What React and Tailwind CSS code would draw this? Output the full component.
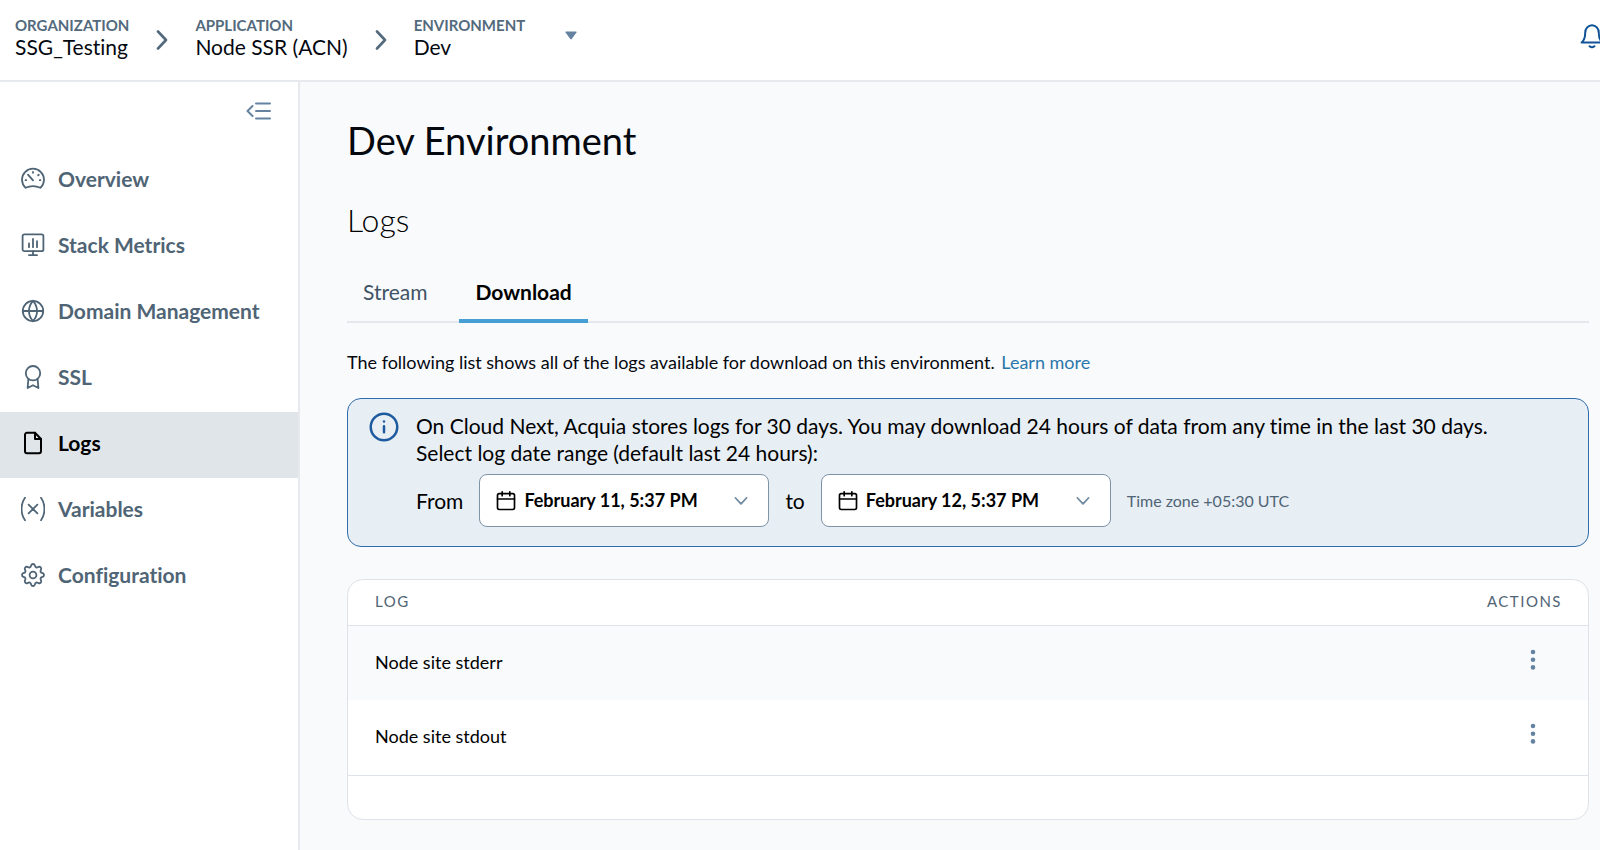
import React from 'react';

const Icon = ({ children, className = 'size-6', strokeWidth = 1.5 }) => (
    <svg
        viewBox="0 0 24 24"
        fill="none"
        stroke="currentColor"
        strokeWidth={strokeWidth}
        strokeLinecap="round"
        strokeLinejoin="round"
        aria-hidden="true"
        className={`shrink-0 ${className}`}
    >
        {children}
    </svg>
);

const navItems = [
    {
        label: 'Overview',
        icon: (
            <>
                <path d="M4.6 20.8A11 11 0 1 1 19.4 20.8Q12 17.4 4.6 20.8Z" />
                <path d="M7 7.6 12 13.4M12 5V5.8M17.8 7.8 17.2 8.3M18.8 13.2H19.4M4.6 13.2H5.2" />
            </>
        ),
    },
    {
        label: 'Stack Metrics',
        icon: (
            <>
                <rect x="1.6" y="1.4" width="20.8" height="16.8" rx="1.8" />
                <path d="M12 18.2V22.2M8 22.2H16M8 14.2V10.4M12 14.2V6M16 14.2V8.2" />
            </>
        ),
    },
    {
        label: 'Domain Management',
        icon: (
            <>
                <circle cx="12" cy="12" r="10.2" />
                <path d="M1.8 12H22.2M12 1.8C6.6 8 6.6 16 12 22.2M12 1.8C17.4 8 17.4 16 12 22.2" />
            </>
        ),
    },
    {
        label: 'SSL',
        icon: (
            <>
                <circle cx="12" cy="8.2" r="7.2" />
                <path d="M7.4 14.2 6.6 23 12 20.2 17.4 23 16.6 14.2" />
            </>
        ),
    },
    {
        label: 'Logs',
        active: true,
        icon: (
            <>
                <path d="M14 1.8H6A2 2 0 0 0 4 3.8V20.2A2 2 0 0 0 6 22.2H18A2 2 0 0 0 20 20.2V8Z" />
                <path d="M14 1.8V8H20" />
            </>
        ),
    },
    {
        label: 'Variables',
        icon: (
            <>
                <path d="M4 .8C-.6 7.4-.6 16.6 4 23.2M20 .8C24.6 7.4 24.6 16.6 20 23.2" />
                <path d="M7.6 7.6 16.4 16.4M16.4 7.6 7.6 16.4" />
            </>
        ),
    },
    {
        label: 'Configuration',
        icon: (
            <>
                <circle cx="12" cy="12" r="3.4" />
                <path d="M10.2 2.3a1.9 1.9 0 0 1 3.6 0l.3.9a1.9 1.9 0 0 0 2.6 1.1l.9-.4a1.9 1.9 0 0 1 2.5 2.5l-.4.9a1.9 1.9 0 0 0 1.1 2.6l.9.3a1.9 1.9 0 0 1 0 3.6l-.9.3a1.9 1.9 0 0 0-1.1 2.6l.4.9a1.9 1.9 0 0 1-2.5 2.5l-.9-.4a1.9 1.9 0 0 0-2.6 1.1l-.3.9a1.9 1.9 0 0 1-3.6 0l-.3-.9a1.9 1.9 0 0 0-2.6-1.1l-.9.4a1.9 1.9 0 0 1-2.5-2.5l.4-.9a1.9 1.9 0 0 0-1.1-2.6l-.9-.3a1.9 1.9 0 0 1 0-3.6l.9-.3a1.9 1.9 0 0 0 1.1-2.6l-.4-.9a1.9 1.9 0 0 1 2.5-2.5l.9.4a1.9 1.9 0 0 0 2.6-1.1Z" />
            </>
        ),
    },
];

const logs = ['Node site stderr', 'Node site stdout'];

const Crumb = ({ label, value }) => (
    <a href="#" className="flex flex-col whitespace-nowrap">
        <span className="text-[15px] leading-5 font-bold text-[#536a7d]">{label}</span>
        <span className="text-[21px] leading-6 text-[#04080f]">{value}</span>
    </a>
);

const CrumbArrow = () => (
    <svg viewBox="0 0 12 20" fill="none" stroke="#536a7d" strokeWidth="2.6" strokeLinecap="round" strokeLinejoin="round" aria-hidden="true" className="mx-[27px] mt-[15px] h-5 w-3 shrink-0">
        <path d="M2 1.5 10 10 2 18.5" />
    </svg>
);

const DateButton = ({ id, value }) => (
    <button id={id} type="button" className="flex h-[53px] w-[290px] items-center rounded-lg border border-[#7d93a8] bg-white pr-5 pl-4">
        <Icon className="mr-2 size-5" strokeWidth={2}>
            <rect x="1.8" y="3.2" width="20.4" height="19" rx="2" />
            <path d="M1.8 9.6H22.2M7.4 1V5.6M16.6 1V5.6" />
        </Icon>
        <span className="text-[18px] font-bold whitespace-nowrap text-black">{value}</span>
        <svg viewBox="0 0 14 8" fill="none" stroke="#6f8aa1" strokeWidth="1.8" strokeLinecap="round" strokeLinejoin="round" aria-hidden="true" className="ml-auto h-2 w-[14px]">
            <path d="M1.5 1 7 6.8 12.5 1" />
        </svg>
    </button>
);

const Header = () => (
    <header className="flex h-[82px] items-start justify-between overflow-hidden border-b-2 border-[#e6eaee] bg-white pt-[15px] pl-[15px]">
        <nav aria-label="Breadcrumb" className="flex items-start">
            <Crumb label="ORGANIZATION" value="SSG_Testing" />
            <CrumbArrow />
            <Crumb label="APPLICATION" value="Node SSR (ACN)" />
            <CrumbArrow />
            <Crumb label="ENVIRONMENT" value="Dev" />
            <button type="button" aria-label="Switch environment" className="mt-4 ml-10">
                <svg viewBox="0 0 12 9" fill="#6583a0" aria-hidden="true" className="h-[9px] w-3">
                    <path d="M1 .5H11Q12.2.5 11.5 1.5L6.7 8Q6 8.8 5.3 8L.5 1.5Q-.2.5 1 .5Z" />
                </svg>
            </button>
        </nav>
        <button type="button" aria-label="Notifications" className="mt-2 -mr-1 text-[#0f5296]">
            <Icon className="h-[26px] w-6" strokeWidth={2}>
                <path d="M1.6 18.5C5 16 5.2 13 5.2 8.8A6.8 7.6 0 0 1 18.8 8.8C18.8 13 19 16 22.4 18.5Z" />
                <path d="M9.6 22.2Q12 24.2 14.4 22.2" />
            </Icon>
        </button>
    </header>
);

const Sidebar = () => (
    <aside className="w-[300px] shrink-0 border-r-2 border-[#e6eaee] bg-white">
        <div className="flex h-[66px] justify-end pt-5 pr-[27px]">
            <button type="button" aria-label="Collapse menu" className="h-4 text-[#6583a0]">
                <svg viewBox="0 0 25 18" fill="none" stroke="currentColor" strokeWidth="2" strokeLinecap="round" strokeLinejoin="round" aria-hidden="true" className="h-[18px] w-[25px]">
                    <path d="M6.5 4 1.5 9 6.5 14M10 1.5H24M10 9H24M10 16.5H24" />
                </svg>
            </button>
        </div>
        <nav aria-label="Environment">
            {navItems.map(item => (
                <a
                    key={item.label}
                    href="#"
                    aria-current={item.active ? 'page' : undefined}
                    className={`flex h-[66px] items-center gap-[13px] pb-1 pl-[21px] text-[21px] leading-6 font-bold ${item.active ? 'bg-[#e0e5e9] text-black' : 'text-[#4f6475]'}`}
                >
                    <Icon strokeWidth={item.active ? 2 : 1.8}>{item.icon}</Icon>
                    {item.label}
                </a>
            ))}
        </nav>
    </aside>
);

const LogTable = () => (
    <div className="mt-8 overflow-hidden rounded-2xl border border-[#dde3e8] bg-white pb-[43px]">
        <table className="w-full border-collapse">
            <thead>
                <tr className="h-[45px] border-b border-[#dde3e8] text-[15px] tracking-widest text-[#4f6475]">
                    <th className="pb-[2px] pl-[27px] text-left font-normal">LOG</th>
                    <th className="pr-[26px] pb-[2px] text-right font-normal">ACTIONS</th>
                </tr>
            </thead>
            <tbody>
                {logs.map(log => (
                    <tr key={log} className="h-[75px] odd:bg-[#f9fafc] last:border-b last:border-[#dde3e8]">
                        <td className="pb-[2px] pl-[27px] text-[18px] leading-6 text-black">{log}</td>
                        <td className="pr-[42px]">
                            <button type="button" aria-label={`Actions for ${log}`} className="ml-auto flex h-7 w-[26px] justify-center">
                                <svg viewBox="0 0 6 22" fill="#6583a0" aria-hidden="true" className="h-[22px] w-[6px]">
                                    <circle cx="3" cy="3" r="2.3" />
                                    <circle cx="3" cy="10.7" r="2.3" />
                                    <circle cx="3" cy="18.4" r="2.3" />
                                </svg>
                            </button>
                        </td>
                    </tr>
                ))}
            </tbody>
        </table>
    </div>
);

const App = () => {
    return (
        <div className="flex min-h-screen flex-col bg-[#f9fafc] font-['Lato',sans-serif] [font-variant-ligatures:none]">
            <Header />
            <div className="flex grow">
                <Sidebar />
                <main className="min-w-0 grow pt-[34px] pr-[11px] pb-7 pl-[47px]">
                    <h1 className="text-[38px] leading-[48px] text-[#04080f]">Dev Environment</h1>
                    <h2 className="mt-8 text-[32px] leading-[48px] font-light text-black">Logs</h2>

                    <div role="tablist" className="mt-5 flex gap-4 border-b-2 border-[#e4e8ec]">
                        <button role="tab" type="button" aria-selected="false" className="-mb-[2px] h-[59px] border-b-4 border-transparent px-4 text-[21px] text-[#3f5364]">Stream</button>
                        <button role="tab" type="button" aria-selected="true" className="-mb-[2px] h-[59px] border-b-4 border-[#459fd5] px-4 text-[21px] font-bold text-black">Download</button>
                    </div>

                    <p className="mt-[27px] text-[18px] leading-6 text-[#04080f]">
                        The following list shows all of the logs available for download on this environment.{' '}
                        <a href="#" className="ml-[2px] text-[#2a77ab]">Learn more</a>
                    </p>

                    <section className="mt-6 flex gap-[17px] rounded-[14px] border border-[#2f6cab] bg-[#e7eef4] pt-[13px] pr-5 pb-[19px] pl-[21px]">
                        <Icon className="size-[30px] text-[#1d5b9e]" strokeWidth={2}>
                            <circle cx="12" cy="12" r="10.6" />
                            <path d="M12 11.4V16.2M12 7.5V7.6" />
                        </Icon>
                        <div className="text-[21px] leading-[27px] text-black">
                            <p>On Cloud Next, Acquia stores logs for 30 days. You may download 24 hours of data from any time in the last 30 days.</p>
                            <p>Select log date range (default last 24 hours):</p>
                            <div className="mt-2 flex items-center gap-4">
                                <label htmlFor="from-date">From</label>
                                <DateButton id="from-date" value="February 11, 5:37 PM" />
                                <label htmlFor="to-date">to</label>
                                <DateButton id="to-date" value="February 12, 5:37 PM" />
                                <span className="text-[16px] text-[#4f6475]">Time zone +05:30 UTC</span>
                            </div>
                        </div>
                    </section>

                    <LogTable />
                </main>
            </div>
        </div>
    );
};

export default App;
